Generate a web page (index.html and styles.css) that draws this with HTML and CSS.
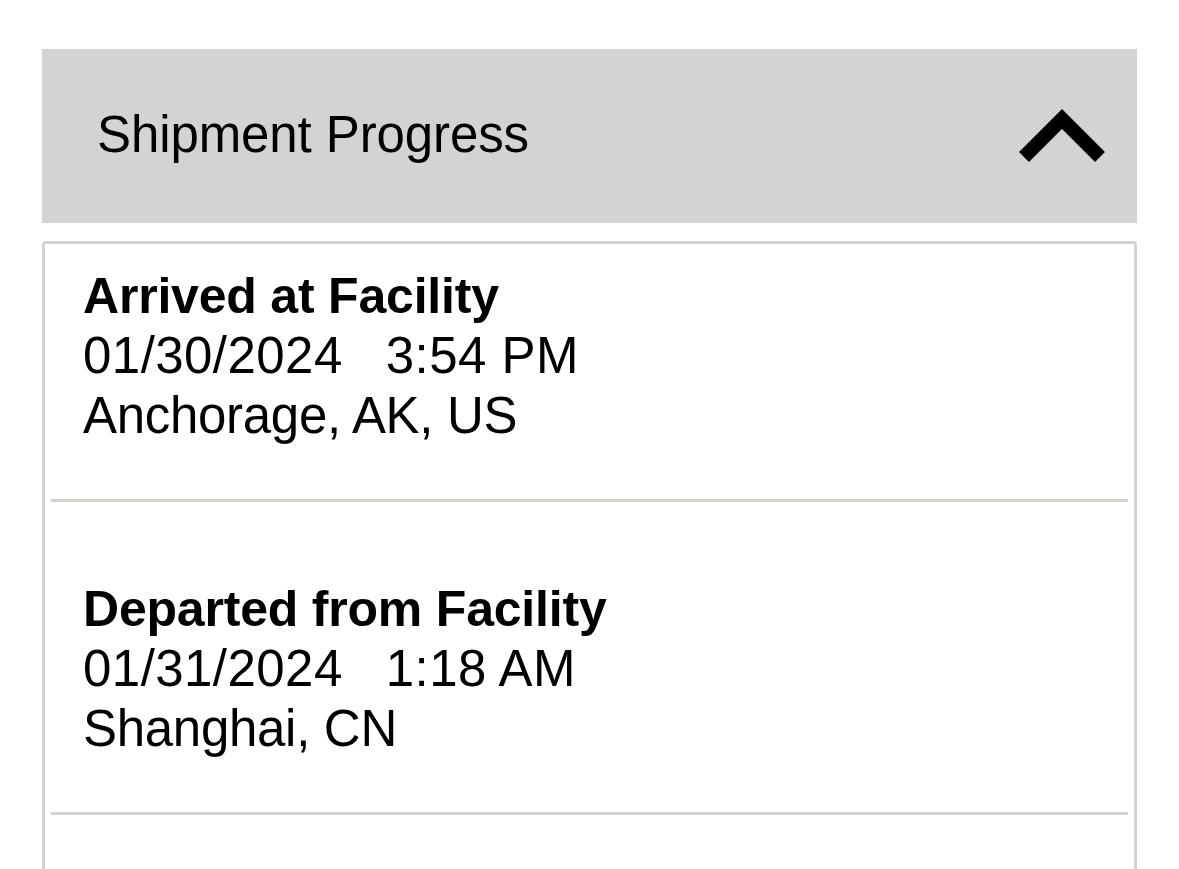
FILE: index.html
```html
<!DOCTYPE html>
<html lang="en">
<head>
<meta charset="utf-8">
<title>Shipment Progress</title>
<link rel="stylesheet" href="styles.css">
</head>
<body>
<section class="panel">
  <header class="panel-header">
    <h2 class="panel-title">Shipment Progress</h2>
    <svg class="chevron" width="94" height="60" viewBox="0 0 94 60" aria-hidden="true">
      <polyline points="11,51 49,13 87,51" fill="none" stroke="#000" stroke-width="14" stroke-linejoin="miter" stroke-linecap="butt"/>
    </svg>
  </header>
  <div class="events">
    <div class="event event-first">
      <div class="event-status">Arrived at Facility</div>
      <div class="event-line event-when"><span class="event-date">01/30/2024</span><span>3:54 PM</span></div>
      <div class="event-line event-where">Anchorage, AK, US</div>
    </div>
    <hr class="divider">
    <div class="event">
      <div class="event-status">Departed from Facility</div>
      <div class="event-line event-when"><span class="event-date">01/31/2024</span><span>1:18 AM</span></div>
      <div class="event-line event-where">Shanghai, CN</div>
    </div>
    <hr class="divider">
    <div class="events-more"></div>
  </div>
</section>
</body>
</html>
```

FILE: styles.css
```css
html {
  overflow: hidden;
}

body {
  margin: 49px 42px 0;
  background: #ffffff;
  font-family: "Liberation Sans", Arial, sans-serif;
  color: #000;
  overflow: hidden;
}

.panel {
  display: flex;
  flex-direction: column;
}

.panel-header {
  box-sizing: border-box;
  height: 174px;
  background: #d3d3d3;
  display: flex;
  align-items: center;
  justify-content: space-between;
  padding: 0 30px 0 55px;
}

.panel-title {
  margin: 0 0 3px;
  font-size: 51px;
  font-weight: 400;
  line-height: 57px;
  letter-spacing: -0.1px;
  color: #000;
}

.chevron {
  display: block;
  flex: none;
}

.events {
  margin-top: 18px;
  border: 3px solid #d2d2d2;
  border-bottom: none;
  border-radius: 4px 4px 0 0;
  background: #fff;
}

.event {
  padding: 77px 0 53px 38px;
}

.event-first {
  padding-top: 22px;
}

.event-status {
  font-size: 50px;
  font-weight: 700;
  letter-spacing: -0.2px;
  line-height: 60px;
}

.event-line {
  font-size: 51px;
  line-height: 60px;
}

.event-when {
  letter-spacing: 0.45px;
}

.event-where {
  letter-spacing: -0.3px;
}

.event-date {
  margin-right: 43px;
}

.divider {
  margin: 0 6px;
  height: 3px;
  border: none;
  background: #d5d2ce;
}

.events-more {
  height: 200px;
}
```
